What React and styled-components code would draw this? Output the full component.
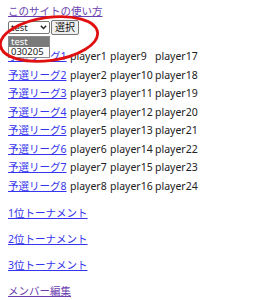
import React from 'react';
import styled, { createGlobalStyle } from 'styled-components';

const GlobalStyle = createGlobalStyle`
    body {
        margin: 0;
        background: #fff;
        font-family: "Noto Sans", "Noto Sans CJK JP", sans-serif;
        font-size: 11px;
        color: #222;
    }
`;

const Page = styled.div`
    position: relative;
    padding: 2px 8px 0;
`;

const Link = styled.a`
    color: ${({ $visited }) => ($visited ? '#6a3fb0' : '#3535ee')};
    text-decoration: underline;
    font-size: 10.5px;
    cursor: pointer;
`;

const Title = styled.div`
    height: 18px;
    line-height: 18px;
`;

const Form = styled.div`
    position: relative;
    display: flex;
    align-items: center;
    gap: 1px;
    height: 15px;
`;

const Select = styled.div`
    width: 36px;
    height: 11px;
    border: 1px solid #767676;
    border-radius: 2px;
    display: flex;
    align-items: center;
    justify-content: space-between;
    padding: 0 2px;
    font-size: 9.5px;
    color: #222;
    box-sizing: content-box;
`;

const Button = styled.button`
    height: 15px;
    padding: 0 3px;
    font-family: inherit;
    font-size: 10px;
    line-height: 13px;
    background: #efefef;
    border: 1px solid #767676;
    border-radius: 2px;
    color: #111;
`;

const Options = styled.ul`
    position: absolute;
    left: 0;
    top: 16px;
    width: 40px;
    margin: 0;
    padding: 0;
    list-style: none;
    background: #fff;
    border: 1px solid #8a8a8a;
    z-index: 2;
    font-size: 9.5px;
`;

const Option = styled.li`
    height: 10px;
    line-height: 10px;
    padding: 0 2px;
    background: ${({ $selected }) => ($selected ? '#7a7a7a' : '#fff')};
    color: ${({ $selected }) => ($selected ? '#fff' : '#222')};
`;

const Leagues = styled.div`
    display: grid;
    grid-template-columns: 62px 40px 45px auto;
    grid-auto-rows: 18.5px;
    align-items: center;
    margin-top: 12px;
    line-height: 16px;
    font-size: 10.5px;
    white-space: nowrap;
`;

const Tournaments = styled.div`
    display: flex;
    flex-direction: column;
    gap: 10px;
    margin-top: 10px;
    line-height: 16px;
`;

const Mark = styled.svg`
    position: absolute;
    left: 0;
    top: 0;
    pointer-events: none;
    z-index: 3;
`;

const leagues = [1, 2, 3, 4, 5, 6, 7, 8].map((n) => ({
    name: `予選リーグ${n}`,
    players: [`player${n}`, `player${n + 8}`, `player${n + 16}`],
}));

const tournaments = ['1位トーナメント', '2位トーナメント', '3位トーナメント'];

export default function App() {
    return (
        <>
            <GlobalStyle />
            <Page>
                <Title>
                    <Link $visited>このサイトの使い方</Link>
                </Title>
                <Form>
                    <Select>
                        <span>test</span>
                        <svg width="7" height="5" viewBox="0 0 7 5">
                            <path d="M0.8 0.8 L3.5 3.6 L6.2 0.8" fill="none" stroke="#222" strokeWidth="1.4" />
                        </svg>
                    </Select>
                    <Button>選択</Button>
                    <Options>
                        <Option $selected>test</Option>
                        <Option>030205</Option>
                    </Options>
                </Form>
                <Leagues>
                    {leagues.map(({ name, players }) => (
                        <React.Fragment key={name}>
                            <span><Link>{name}</Link></span>
                            {players.map((p) => (
                                <span key={p}>{p}</span>
                            ))}
                        </React.Fragment>
                    ))}
                </Leagues>
                <Tournaments>
                    {tournaments.map((t) => (
                        <span key={t}><Link>{t}</Link></span>
                    ))}
                    <span><Link $visited>メンバー編集</Link></span>
                </Tournaments>
                <Mark width="130" height="70" viewBox="0 0 130 70">
                    <ellipse cx="49" cy="39" rx="49" ry="21.5" transform="rotate(-8 49 39)" fill="none" stroke="#e01010" strokeWidth="2.8" />
                </Mark>
            </Page>
        </>
    );
}
